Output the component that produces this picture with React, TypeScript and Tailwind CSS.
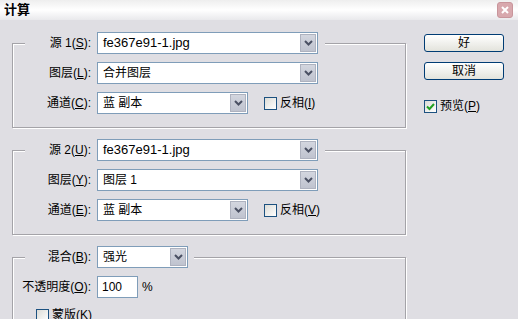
import type { ReactNode } from "react";

// ─────────────────────────────────────────────
// Calculations dialog (XP style)
// Two source groups, blending group and
// the OK / Cancel / Preview column.
// ─────────────────────────────────────────────

const FONT = "font-['Liberation_Sans','Noto_Sans_CJK_SC',sans-serif]";

function Chevron() {
  return (
    <svg width="9" height="6" viewBox="0 0 9 6">
      <path d="M1 1 L4.5 4.5 L8 1" fill="none" stroke="#4a5063" strokeWidth="2" />
    </svg>
  );
}

function Select({ value, width }: { value: ReactNode; width: string }) {
  return (
    <div className={`${width} h-[22px] flex border border-[#7f9db9] bg-white`}>
      <div className="flex-1 flex items-center pl-[5px] whitespace-nowrap overflow-hidden">
        {value}
      </div>
      <div className="w-[16px] my-px mr-px flex items-center justify-center bg-gradient-to-b from-[#d3d6df] to-[#bfc3cf] border border-[#aeb2bf]">
        <Chevron />
      </div>
    </div>
  );
}

function Checkbox({ checked = false }: { checked?: boolean }) {
  return (
    <div className="w-[13px] h-[13px] flex items-center justify-center border border-[#1c5180] bg-gradient-to-br from-[#dcdcd7] to-white">
      {checked && (
        <svg width="9" height="9" viewBox="0 0 9 9">
          <path d="M1 4.5 L3.5 7 L8 2" fill="none" stroke="#21a121" strokeWidth="2" />
        </svg>
      )}
    </div>
  );
}

function Label({ children }: { children: ReactNode }) {
  return (
    <div className="w-[66px] flex justify-end whitespace-nowrap flex-shrink-0">
      {children}
    </div>
  );
}

function Row({ label, children }: { label: ReactNode; children: ReactNode }) {
  return (
    <div className="flex items-center gap-[6px] h-[22px]">
      <Label>{label}</Label>
      {children}
    </div>
  );
}

function Group({ legend, children, pr }: { legend: ReactNode; children: ReactNode; pr: string }) {
  return (
    <fieldset className="border border-[#a4a3a8] shadow-[inset_1px_1px_0_#fff,1px_1px_0_#fff] px-[12px] pt-[8px] pb-[13px]">
      <legend className={`bg-[#dfdee3] ${pr}`}>{legend}</legend>
      <div className="flex flex-col gap-[8px]">{children}</div>
    </fieldset>
  );
}

function File() {
  return <span className="text-[13px]">fe367e91-1.jpg</span>;
}

function Channel({ mnemonic, invert }: { mnemonic: string; invert: string }) {
  return (
    <Row label={<span>通道(<u>{mnemonic}</u>):</span>}>
      <Select width="w-[151px]" value="蓝 副本" />
      <div className="ml-[10px] flex items-center gap-[3px]">
        <Checkbox />
        <span>反相(<u>{invert}</u>)</span>
      </div>
    </Row>
  );
}

export default function App() {
  return (
    <div className={`w-[518px] h-[319px] overflow-hidden bg-[#dfdee3] text-[12px] text-black ${FONT}`}>
      {/* Title bar */}
      <div className="h-[20px] flex items-center justify-between pl-[4px] pr-[5px] bg-gradient-to-b from-[#eeeeee] via-white to-[#e9e9ec]">
        <span className="font-bold text-[13px]">计算</span>
        <div className="w-[16px] h-[16px] rounded-[3px] bg-[#d8a8ad] border border-[#c8959b] flex items-center justify-center">
          <svg width="8" height="8" viewBox="0 0 8 8">
            <path d="M1 1 L7 7 M7 1 L1 7" stroke="#fff" strokeWidth="2" />
          </svg>
        </div>
      </div>

      <div className="flex pl-[12px] pt-[12px]">
        {/* Left column */}
        <div className="w-[394px] flex flex-col gap-[11px]">
          <Group
            pr="pr-[7px]"
            legend={
              <Row label={<span>源 1(<u>S</u>):</span>}>
                <Select width="w-[221px]" value={<File />} />
              </Row>
            }
          >
            <Row label={<span>图层(<u>L</u>):</span>}>
              <Select width="w-[221px]" value="合并图层" />
            </Row>
            <Channel mnemonic="C" invert="I" />
          </Group>

          <Group
            pr="pr-[7px]"
            legend={
              <Row label={<span>源 2(<u>U</u>):</span>}>
                <Select width="w-[221px]" value={<File />} />
              </Row>
            }
          >
            <Row label={<span>图层(<u>Y</u>):</span>}>
              <Select width="w-[221px]" value="图层 1" />
            </Row>
            <Channel mnemonic="E" invert="V" />
          </Group>

          <Group
            pr="pr-[6px]"
            legend={
              <Row label={<span>混合(<u>B</u>):</span>}>
                <Select width="w-[91px]" value="强光" />
              </Row>
            }
          >
            <Row label={<span>不透明度(<u>O</u>):</span>}>
              <div className="w-[41px] h-[22px] flex items-center pl-[4px] border border-[#7f9db9] bg-white">
                100
              </div>
              <span className="ml-[-2px]">%</span>
            </Row>
            <div className="flex items-center gap-[3px] pl-[11px]">
              <Checkbox />
              <span>蒙版(<u>K</u>)</span>
            </div>
          </Group>
        </div>

        {/* Right column */}
        <div className="ml-[18px] pt-[2px] flex flex-col gap-[10px] w-[80px]">
          <button className="h-[18px] rounded-[3px] border border-[#003c74] bg-gradient-to-b from-white to-[#e3e3dc] flex items-center justify-center">
            好
          </button>
          <button className="h-[18px] rounded-[3px] border border-[#003c74] bg-gradient-to-b from-white to-[#e3e3dc] flex items-center justify-center">
            取消
          </button>
          <div className="flex items-center gap-[3px] mt-[7px]">
            <Checkbox checked />
            <span>预览(<u>P</u>)</span>
          </div>
        </div>
      </div>
    </div>
  );
}
